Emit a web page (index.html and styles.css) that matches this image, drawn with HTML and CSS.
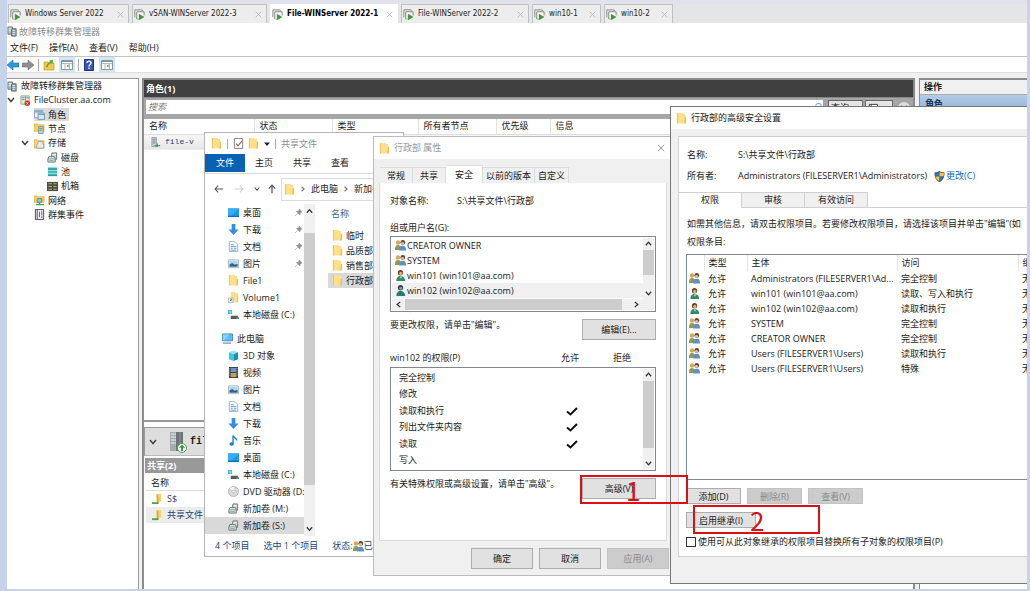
FILE: index.html
```html
<!DOCTYPE html>
<html lang="zh-CN">
<head>
<meta charset="UTF-8">
<meta name="viewport" content="width=device-width, initial-scale=1.0">
<title>故障转移群集管理器</title>
<link rel="stylesheet" href="styles.css">
</head>
<body>

<!-- Icon sprite -->
<svg class="sprite" aria-hidden="true">
  <symbol id="i-vm" viewBox="0 0 12 12"><path d="M1 9V1h8v1M3 11V3h8v4" fill="#fff" stroke="#777" /><path d="M3 11h3M5.500 5.500v6.500l5.500-3.200z" fill="#3c9a2d" stroke="#3c9a2d" stroke-width=".4"/></symbol>
  <symbol id="i-x" viewBox="0 0 10 10"><path d="M1 1l8 8M9 1l-8 8" fill="none" stroke="currentColor" stroke-width="1.200"/></symbol>
  <symbol id="i-cluster" viewBox="0 0 12 12"><path d="M1 1h5v8H1z" fill="#b4bfc3" stroke="#6d7b80"/><path d="M5 3h5v8H5z" fill="#8d9ba0" stroke="#5d6b70"/><path d="M2 3h3M2 5h2M6 5h3M6 7h3M6 9h3" stroke="#e9f2f4"/></symbol>
  <symbol id="i-clred" viewBox="0 0 12 12"><path d="M1 1h5v9H1zM6 1h4v6H6z" fill="#e7ead2" stroke="#9aa07c"/><path d="M2 3h3M2 5h3M7 3h3" stroke="#5f8fc4"/><circle cx="8" cy="9" r="3" fill="#d8322c"/><path d="M7 8l2 2M9 8l-2 2" stroke="#fff"/></symbol>
  <symbol id="i-role" viewBox="0 0 12 12"><path d="M.5 1.500h9v8h-9z" fill="#e8f1f7" stroke="#8aa0b3"/><path d="M1 2h8v2H1z" fill="#7fb1dc"/><path d="M4.500 4.500h7v7h-7z" fill="#d4e6f3" stroke="#7893a9"/><path d="M5 6h6" stroke="#5f9ccb"/></symbol>
  <symbol id="i-node" viewBox="0 0 12 12"><path d="M0 1h4l1 1h6v7H0z" fill="#f4d35e" stroke="#c5a336" stroke-width=".6"/><path d="M5 4h5v7.500H5z" fill="#c8d3d8" stroke="#6d8088" stroke-width=".8"/><path d="M6 6h3M6 8h3" stroke="#52a95d"/></symbol>
  <symbol id="i-store" viewBox="0 0 12 12"><path d="M0 2h4l1 1h6v8H0z" fill="#f7d873" stroke="#caa53a" stroke-width=".7"/><path d="M3 8l1.500-4H9l1.500 4v3H3z" fill="#e9edf0" stroke="#8a949a" stroke-width=".8"/></symbol>
  <symbol id="i-disk" viewBox="0 0 12 12"><path d="M4.500 5l1-4h5v7H9" fill="#cbd6d2" stroke="#65766f"/><path d="M1 7.500l1-2.500h6l1 2.500v3.500H1z" fill="#dfe6e4" stroke="#65766f"/><path d="M1 7.500h8M2.500 9.500h5" stroke="#6b8e7b" stroke-width=".8"/><path d="M6.500 3h3" stroke="#fff"/></symbol>
  <symbol id="i-pool" viewBox="0 0 12 12"><path d="M1 1h10v10H1z" fill="#38b5b5"/><path d="M1 1.500h10M1 5h10M1 8h10" stroke="#aee7e5"/><path d="M1 3.500h10M1 10.500h10" stroke="#247f85" stroke-width=".6"/></symbol>
  <symbol id="i-rack" viewBox="0 0 12 12"><path d="M0 1h12v10H0z" fill="#4b503f"/><path d="M1.500 3h4M7 3h3.500M1.500 6h4M7 6h3.500M1.500 9h4M7 9h3.500" stroke="#b2b78e"/></symbol>
  <symbol id="i-net" viewBox="0 0 12 12"><path d="M0 1h4l1 1h6v6H0z" fill="#f4d35e" stroke="#c5a336" stroke-width=".6"/><path d="M3.500 4h5v4h-5z" fill="#8cc6ea" stroke="#52728a" stroke-width=".8"/><path d="M6 8v2M2 10.500h9" stroke="#44a04d" stroke-width="1.500"/></symbol>
  <symbol id="i-event" viewBox="0 0 12 12"><path d="M1.500.5h9v11h-9z" fill="#f2eff6" stroke="#4b4258"/><path d="M3.500 1v10" stroke="#4b4258"/><path d="M6 3v6M8.500 2v5" stroke="#b13963"/><path d="M8.500 8v2" stroke="#444"/></symbol>
  <symbol id="i-folder" viewBox="0 0 12 12"><path d="M1 0h6.500v1H10v10.500H1z" fill="#ffe08a"/><path d="M1 0h1v11.500H1zM9.500 4H11v7.500H9z" fill="#edc257"/></symbol>
  <symbol id="i-flink" viewBox="0 0 12 12"><path d="M3 0h5v1h3v10.500H3z" fill="#ffe08a"/><path d="M10 4h1v7.500h-1z" fill="#edc257"/><path d="M.5 6.500h5v5h-5z" fill="#fff" stroke="#9a9a9a" stroke-width=".7"/><path d="M2 10l2-2M2.500 8H4v1.500" stroke="#2676c6" fill="none"/></symbol>
  <symbol id="i-task" viewBox="0 0 12 12"><path d="M1.500.5h9v11h-9z" fill="#fff" stroke="#777ba0"/><path d="M3.500 6l2 2.500 4-5" fill="none" stroke="#d2542f" stroke-width="1.300"/></symbol>
  <symbol id="i-desk" viewBox="0 0 12 12"><path d="M0 1.500h12v9H0z" fill="#1c97ec"/><path d="M0 1.500h12L3 10H0z" fill="#36abf7"/><path d="M0 9.500h12v1.500H0z" fill="#0b70c0"/></symbol>
  <symbol id="i-down" viewBox="0 0 12 12"><path d="M4 0h4v6h3.500L6 12 .5 6H4z" fill="#2f8fe6"/></symbol>
  <symbol id="i-doc" viewBox="0 0 12 12"><path d="M1.500.5h6l3 3v8h-9z" fill="#f1f7fc" stroke="#8aa2b8" stroke-width=".8"/><path d="M3 4h3M3 6h6M3 8h2M6.500 8H9M3 10h6" stroke="#4d96d2" stroke-width=".9"/></symbol>
  <symbol id="i-pic" viewBox="0 0 12 12"><path d="M.5 2h11v8.500H.5z" fill="#eef6fc" stroke="#8b9ba8" stroke-width=".7"/><path d="M1.500 3h9v4h-9z" fill="#a9d6f5"/><path d="M1.500 9.500V7l3-1.500L7 7l3.500-.5v3z" fill="#39617d"/></symbol>
  <symbol id="i-drive" viewBox="0 0 12 12"><path d="M0 1h2v2H0zM2.500 1h2v2h-2zM0 3.500h2v2H0zM2.500 3.500h2v2h-2z" fill="#26b6d9"/><path d="M3 7.500h8l1 3.500H3z" fill="#555c60"/><path d="M3 7h8" stroke="#c2c8cb"/><path d="M9 10h2" stroke="#66d35c"/></symbol>
  <symbol id="i-pc" viewBox="0 0 12 12"><path d="M.5 1h11v7.500H.5z" fill="#5bbcf7" stroke="#2e78b0" stroke-width=".8"/><path d="M1 1.500h7l-5 6.500H1z" fill="#8ad3fc"/><path d="M1 11h9" stroke="#7a93a3" stroke-width="1.400"/></symbol>
  <symbol id="i-cube" viewBox="0 0 12 12"><path d="M1 2.500L6 .5l5 2-5 2z" fill="#9ce4f0"/><path d="M1 2.500l5 2V12L1 10z" fill="#44c3d8"/><path d="M6 4.500l5-2V10l-5 2z" fill="#1a8fae"/></symbol>
  <symbol id="i-video" viewBox="0 0 12 12"><path d="M1 0h10v12H1z" fill="#3c434a"/><path d="M3 1h6v4.500H3z" fill="#6f93c4"/><path d="M3 6.500h6V11H3z" fill="#c49e50"/><path d="M2 1v10M10 1v10" stroke="#ccc" stroke-dasharray="1 1" stroke-width=".8"/></symbol>
  <symbol id="i-music" viewBox="0 0 12 12"><path d="M5.500 9.500V.5c.5 2.500 4 3 4 5.500" fill="none" stroke="#1383d8" stroke-width="1.500"/><ellipse cx="4" cy="9.700" rx="2.400" ry="1.900" fill="#1383d8"/></symbol>
  <symbol id="i-dvd" viewBox="0 0 12 12"><circle cx="6" cy="6" r="5.500" fill="#d8dadc" stroke="#9d9fa1" stroke-width=".7"/><path d="M6 6L2 2.500A5 5 0 0 1 6 .8z" fill="#f8f8f8"/><circle cx="6" cy="6" r="1.500" fill="#fff" stroke="#999" stroke-width=".5"/></symbol>
  <symbol id="i-group" viewBox="0 0 12 12"><circle cx="3.300" cy="2.800" r="2.400" fill="#d3a85f"/><path d="M0 11c0-4 1-5.500 3.500-5.500S7 8 7 11z" fill="#8f9a4e"/><circle cx="8.500" cy="2.700" r="2.600" fill="#6a4630"/><circle cx="8.200" cy="3.700" r="1.600" fill="#eac294"/><path d="M4.500 11.500c0-4 1.500-5.300 3.800-5.300S12 7.500 12 11.500z" fill="#5f8fc6"/></symbol>
  <symbol id="i-user" viewBox="0 0 12 12"><circle cx="6" cy="3" r="2.900" fill="#62452f"/><circle cx="6.300" cy="3.800" r="1.800" fill="#dbac80"/><path d="M1.500 12c0-4 2-5.500 4.500-5.500s5 1.500 5 5.500z" fill="#2e8b63"/><path d="M5.500 7l1 2.500L7.500 7z" fill="#fff"/></symbol>
  <symbol id="i-user2" viewBox="0 0 12 12"><circle cx="6" cy="3" r="2.900" fill="#31464a"/><circle cx="6.300" cy="3.800" r="1.600" fill="#8aa092"/><path d="M1.500 12c0-4 2-5.500 4.500-5.500s5 1.500 5 5.500z" fill="#1f7f78"/></symbol>
  <symbol id="i-shield" viewBox="0 0 12 12"><path d="M6 0c2 1.300 3.500 1.500 5.500 1.500C11.500 7 10 10 6 12 2 10 .5 7 .5 1.500 2.500 1.500 4 1.300 6 0z" fill="#4d4d4d"/><path d="M6 1v5H1.500L1.200 2.300C3 2.200 4.500 2 6 1z" fill="#2c6fc4"/><path d="M6 1v5h4.500l.3-3.700C9 2.200 7.500 2 6 1zM6 6v5C3.500 9.800 2 8.500 1.500 6z" fill="#f3c52e"/><path d="M6 6v5c2.500-1.200 4-2.500 4.500-5z" fill="#2c6fc4"/></symbol>
  <symbol id="i-pin" viewBox="0 0 10 10"><path d="M6 0l4 4-1 .5L7.500 6 7 8.500l-5-5L4.500 3 6 1.300zM4 6L0 10" fill="#8c9399" stroke="#8c9399" stroke-width=".8"/></symbol>
  <symbol id="i-cu" viewBox="0 0 8 8"><path d="M1 6l3-3.500L7 6" fill="none" stroke="currentColor" stroke-width="1.500"/></symbol>
  <symbol id="i-cd" viewBox="0 0 8 8"><path d="M1 2l3 3.500L7 2" fill="none" stroke="currentColor" stroke-width="1.500"/></symbol>
  <symbol id="i-cl" viewBox="0 0 8 8"><path d="M6 1L2.500 4 6 7" fill="none" stroke="currentColor" stroke-width="1.500"/></symbol>
  <symbol id="i-cr" viewBox="0 0 8 8"><path d="M2 1l3.500 3L2 7" fill="none" stroke="currentColor" stroke-width="1.500"/></symbol>
  <symbol id="i-left" viewBox="0 0 12 12"><path d="M11 6H1.500M5 2L1.300 6 5 10" fill="none" stroke="currentColor" stroke-width="1.300"/></symbol>
  <symbol id="i-right" viewBox="0 0 12 12"><path d="M1 6h9.500M7 2l3.700 4L7 10" fill="none" stroke="currentColor" stroke-width="1.300"/></symbol>
  <symbol id="i-up" viewBox="0 0 12 12"><path d="M6 11V1.500M2 5.500l4-4.200 4 4.200" fill="none" stroke="currentColor" stroke-width="1.500"/></symbol>
  <symbol id="i-tri" viewBox="0 0 8 8"><path d="M0 2h8L4 6.500z" fill="currentColor"/></symbol>
  <symbol id="i-check" viewBox="0 0 12 12"><path d="M1 6.500L4.500 9.500 11 3" fill="none" stroke="#111" stroke-width="2"/></symbol>
  <symbol id="i-back" viewBox="0 0 12 12"><path d="M6 1v3h6v4H6v3L0 6z" fill="#2f9ad8" stroke="#1a73ad" stroke-width=".6"/></symbol>
  <symbol id="i-fwd" viewBox="0 0 12 12"><path d="M6 1v3H0v4h6v3l6-5z" fill="#8d8f91" stroke="#6e7072" stroke-width=".6"/></symbol>
  <symbol id="i-upf" viewBox="0 0 12 12"><path d="M1 3h4l1 1h5v7H1z" fill="#f3c94c" stroke="#b9922a" stroke-width=".7"/><path d="M3 8c1-3 2-4 4-5l-1-1.500L10 1l-.5 4L8 4C6 5 5 6 4.500 8.500z" fill="#54ae3c"/></symbol>
  <symbol id="i-pane" viewBox="0 0 12 12"><path d="M.5 1.500h11v9H.5z" fill="#fff" stroke="#8d979f"/><path d="M1 2.500h10" stroke="#6f91b0"/><path d="M1 4.500h10M4 5v5M8.500 5v5" stroke="#b3bcc3"/><path d="M7.500 5.500L5.500 7l2 1.500z" fill="#38943a"/></symbol>
  <symbol id="i-help" viewBox="0 0 12 12"><path d="M1.500.5h9v11h-9z" fill="#3457b8" stroke="#1f3680"/><path d="M4 4c0-2.500 4-2.500 4 0 0 1.500-2 1.500-2 3.500M6 8.500V10" fill="none" stroke="#fff" stroke-width="1.400"/></symbol>
  <symbol id="i-srv" viewBox="0 0 12 12"><path d="M2 .5h5v10H2z" fill="#c8cfd2" stroke="#7f8a8f" stroke-width=".7"/><path d="M3 2.500h3M3 4.500h3M3 6.500h3" stroke="#6d787d" stroke-width=".8"/><path d="M5 9.500h6M8 7v4" stroke="#3aa648" stroke-width="1.400"/></symbol>
  <symbol id="i-bigsrv" viewBox="0 0 18 22"><path d="M1 1h7v19H1z" fill="#a4acb0"/><path d="M7 1h7v19H7z" fill="#6c7478"/><path d="M2 3h5M2 6h5M2 9h5M2 12h5" stroke="#edf1f2" stroke-width="1.200"/><path d="M11 1v19" stroke="#8e979b"/><circle cx="13" cy="17" r="4.500" fill="#fff" stroke="#4aa354"/><path d="M13 13.500l3 3.300h-2V20h-2v-3.200h-2z" fill="#2f9e3b"/></symbol>
  <symbol id="i-share" viewBox="0 0 12 12"><path d="M5 0h5v8L6 10z" fill="#f6d565"/><path d="M5 0l2 2v9L5 9z" fill="#d9ab32"/><path d="M0 10h7" stroke="#41a84c" stroke-width="2"/></symbol>
  <symbol id="i-find" viewBox="0 0 10 10"><circle cx="5" cy="4" r="3" fill="none" stroke="#8fb4dc" stroke-width="1.300"/><path d="M5 7v3" stroke="#8fb4dc"/></symbol>
  <symbol id="i-save" viewBox="0 0 12 12"><path d="M1.500 1.500h9v9h-9z" fill="#fff" stroke="#333"/><path d="M3.500 1.500v9" stroke="#333"/></symbol>
</svg>

<main class="screen">

  <!-- VM tabs -->
  <nav class="vm-tabs">
    <div class="vm-tab w-a"><svg><use href="#i-vm"/></svg><button>Windows Server 2022</button><button class="x" aria-label="关闭"><svg><use href="#i-x"/></svg></button></div>
    <div class="vm-tab w-b"><svg><use href="#i-vm"/></svg><button>vSAN-WINServer 2022-3</button><button class="x" aria-label="关闭"><svg><use href="#i-x"/></svg></button></div>
    <div class="vm-tab w-c active"><svg><use href="#i-vm"/></svg><button>File-WINServer 2022-1</button><button class="x" aria-label="关闭"><svg><use href="#i-x"/></svg></button></div>
    <div class="vm-tab w-c"><svg><use href="#i-vm"/></svg><button>File-WINServer 2022-2</button><button class="x" aria-label="关闭"><svg><use href="#i-x"/></svg></button></div>
    <div class="vm-tab w-d"><svg><use href="#i-vm"/></svg><button>win10-1</button><button class="x" aria-label="关闭"><svg><use href="#i-x"/></svg></button></div>
    <div class="vm-tab w-d"><svg><use href="#i-vm"/></svg><button>win10-2</button><button class="x" aria-label="关闭"><svg><use href="#i-x"/></svg></button></div>
  </nav>

  <!-- Failover Cluster Manager -->
  <header class="app-title"><svg class="ic"><use href="#i-cluster"/></svg>故障转移群集管理器</header>
  <nav class="menu"><button>文件(F)</button><button>操作(A)</button><button>查看(V)</button><button>帮助(H)</button></nav>
  <div class="toolbar">
    <button aria-label="后退"><svg><use href="#i-back"/></svg></button>
    <button aria-label="前进"><svg><use href="#i-fwd"/></svg></button>
    <i></i>
    <button aria-label="向上"><svg><use href="#i-upf"/></svg></button>
    <button class="on" aria-label="树"><svg><use href="#i-pane"/></svg></button>
    <i></i>
    <button aria-label="帮助"><svg><use href="#i-help"/></svg></button>
    <button class="on" aria-label="操作窗格"><svg><use href="#i-pane"/></svg></button>
  </div>

  <div class="panes">
    <aside class="tree">
      <ul>
        <li><svg class="ic"><use href="#i-cluster"/></svg>故障转移群集管理器</li>
        <li><svg class="chev"><use href="#i-cd"/></svg><svg class="ic"><use href="#i-clred"/></svg>FileCluster.aa.com</li>
        <li class="l2"><span class="sel"><svg class="ic"><use href="#i-role"/></svg>角色</span></li>
        <li class="l2"><svg class="ic"><use href="#i-node"/></svg>节点</li>
        <li class="l2c"><svg class="chev"><use href="#i-cd"/></svg><svg class="ic"><use href="#i-store"/></svg>存储</li>
        <li class="l3"><svg class="ic"><use href="#i-disk"/></svg>磁盘</li>
        <li class="l3"><svg class="ic"><use href="#i-pool"/></svg>池</li>
        <li class="l3"><svg class="ic"><use href="#i-rack"/></svg>机箱</li>
        <li class="l2"><svg class="ic"><use href="#i-net"/></svg>网络</li>
        <li class="l2"><svg class="ic"><use href="#i-event"/></svg>群集事件</li>
      </ul>
    </aside>

    <section class="center">
      <h2>角色(1)</h2>
      <div class="filter">
        <label class="search"><input type="text" placeholder="搜索" aria-label="搜索"><svg><use href="#i-find"/></svg></label>
        <button class="drop">查询<svg><use href="#i-tri"/></svg></button>
        <button class="drop" aria-label="保存"><svg class="save"><use href="#i-save"/></svg><svg><use href="#i-tri"/></svg></button>
        <button class="round" aria-label="展开"><svg><use href="#i-cd"/></svg></button>
      </div>
      <table class="roles">
        <colgroup><col class="c1"><col class="c2"><col class="c3"><col class="c2"><col class="c4"><col></colgroup>
        <thead><tr><th>名称</th><th>状态</th><th>类型</th><th>所有者节点</th><th>优先级</th><th>信息</th></tr></thead>
        <tbody><tr><td colspan="6"><svg class="ic"><use href="#i-srv"/></svg>file-v</td></tr></tbody>
      </table>
      <div class="detail">
        <div class="detail-head"><svg class="chev"><use href="#i-cd"/></svg><svg class="big"><use href="#i-bigsrv"/></svg><b>file-v</b></div>
        <h3>共享(2)</h3>
        <div class="shares">
          <p class="th">名称</p>
          <p><svg class="ic"><use href="#i-share"/></svg>S$</p>
          <p class="sel"><svg class="ic"><use href="#i-share"/></svg>共享文件</p>
        </div>
      </div>
    </section>

    <aside class="actions">
      <h2>操作</h2>
      <h3>角色</h3>
    </aside>
  </div>

  <!-- Explorer -->
  <section class="win explorer">
    <header class="ex-title">
      <svg class="ic"><use href="#i-folder"/></svg><i></i><svg class="ic"><use href="#i-task"/></svg><svg class="ic"><use href="#i-folder"/></svg><svg class="tri"><use href="#i-tri"/></svg><i></i><span>共享文件</span>
    </header>
    <nav class="ribbon"><button class="file">文件</button><button>主页</button><button>共享</button><button>查看</button></nav>
    <div class="ex-nav">
      <button aria-label="后退"><svg><use href="#i-left"/></svg></button>
      <button class="off" aria-label="前进"><svg><use href="#i-right"/></svg></button>
      <button class="sm" aria-label="最近"><svg><use href="#i-cd"/></svg></button>
      <button aria-label="上移"><svg><use href="#i-up"/></svg></button>
      <div class="address"><svg class="ic"><use href="#i-folder"/></svg><svg class="sep"><use href="#i-cr"/></svg>此电脑<svg class="sep"><use href="#i-cr"/></svg>新加卷</div>
    </div>
    <div class="ex-body">
      <ul class="places">
        <li><svg class="ic"><use href="#i-desk"/></svg>桌面<svg class="pin"><use href="#i-pin"/></svg></li>
        <li><svg class="ic"><use href="#i-down"/></svg>下载<svg class="pin"><use href="#i-pin"/></svg></li>
        <li><svg class="ic"><use href="#i-doc"/></svg>文档<svg class="pin"><use href="#i-pin"/></svg></li>
        <li><svg class="ic"><use href="#i-pic"/></svg>图片<svg class="pin"><use href="#i-pin"/></svg></li>
        <li><svg class="ic"><use href="#i-folder"/></svg>File1</li>
        <li><svg class="ic"><use href="#i-flink"/></svg>Volume1</li>
        <li><svg class="ic"><use href="#i-drive"/></svg>本地磁盘 (C:)</li>
        <li class="root"><svg class="ic"><use href="#i-pc"/></svg>此电脑</li>
        <li><svg class="ic"><use href="#i-cube"/></svg>3D 对象</li>
        <li><svg class="ic"><use href="#i-video"/></svg>视频</li>
        <li><svg class="ic"><use href="#i-pic"/></svg>图片</li>
        <li><svg class="ic"><use href="#i-doc"/></svg>文档</li>
        <li><svg class="ic"><use href="#i-down"/></svg>下载</li>
        <li><svg class="ic"><use href="#i-music"/></svg>音乐</li>
        <li><svg class="ic"><use href="#i-desk"/></svg>桌面</li>
        <li><svg class="ic"><use href="#i-drive"/></svg>本地磁盘 (C:)</li>
        <li><svg class="ic"><use href="#i-dvd"/></svg>DVD 驱动器 (D:</li>
        <li><svg class="ic"><use href="#i-disk"/></svg>新加卷 (M:)</li>
        <li class="sel"><svg class="ic"><use href="#i-disk"/></svg>新加卷 (S:)</li>
      </ul>
      <div class="vbar ex-bar"><svg><use href="#i-cu"/></svg><span></span><svg><use href="#i-cd"/></svg></div>
      <div class="files">
        <p class="th">名称</p>
        <p><svg class="ic"><use href="#i-folder"/></svg>临时</p>
        <p><svg class="ic"><use href="#i-folder"/></svg>品质部</p>
        <p><svg class="ic"><use href="#i-folder"/></svg>销售部</p>
        <p class="sel"><svg class="ic"><use href="#i-folder"/></svg>行政部</p>
      </div>
    </div>
    <footer class="ex-status"><span>4 个项目</span><span>选中 1 个项目</span><span class="state">状态:<svg class="ic"><use href="#i-group"/></svg>已共享</span></footer>
  </section>

  <!-- Properties dialog -->
  <section class="win props">
    <header class="dlg-title"><svg class="ic"><use href="#i-folder"/></svg><span>行政部 属性</span><button aria-label="关闭"><svg><use href="#i-x"/></svg></button></header>
    <nav class="tabs"><button>常规</button><button>共享</button><button class="active">安全</button><button>以前的版本</button><button>自定义</button></nav>
    <div class="page">
      <p class="object"><span>对象名称:</span>S:\共享文件\行政部</p>
      <p class="cap">组或用户名(G):</p>
      <div class="box users">
        <div class="users-main">
          <ul>
            <li><svg class="ic"><use href="#i-group"/></svg>CREATOR OWNER</li>
            <li><svg class="ic"><use href="#i-group"/></svg>SYSTEM</li>
            <li><svg class="ic"><use href="#i-user"/></svg>win101 (win101@aa.com)</li>
            <li class="sel"><svg class="ic"><use href="#i-user2"/></svg>win102 (win102@aa.com)</li>
          </ul>
          <div class="vbar"><svg><use href="#i-cu"/></svg><span></span><svg><use href="#i-cd"/></svg></div>
        </div>
        <div class="hbar"><svg><use href="#i-cl"/></svg><span></span><svg><use href="#i-cr"/></svg></div>
      </div>
      <div class="line edit"><p>要更改权限，请单击"编辑"。</p><button class="btn">编辑(E)...</button></div>
      <div class="perm-head"><span>win102 的权限(P)</span><span>允许</span><span>拒绝</span></div>
      <div class="box perms">
        <ul>
          <li>完全控制</li>
          <li>修改</li>
          <li>读取和执行<svg><use href="#i-check"/></svg></li>
          <li>列出文件夹内容<svg><use href="#i-check"/></svg></li>
          <li>读取<svg><use href="#i-check"/></svg></li>
          <li>写入</li>
        </ul>
        <div class="vbar"><svg><use href="#i-cu"/></svg><span></span><svg><use href="#i-cd"/></svg></div>
      </div>
      <div class="line adv-line"><p>有关特殊权限或高级设置，请单击"高级"。</p><button class="btn">高级(V)</button></div>
    </div>
    <footer class="dlg-foot"><button class="btn">确定</button><button class="btn">取消</button><button class="btn" disabled>应用(A)</button></footer>
  </section>

  <!-- Advanced security dialog -->
  <section class="win advanced">
    <header class="dlg-title"><svg class="ic"><use href="#i-folder"/></svg><span>行政部的高级安全设置</span></header>
    <div class="page">
      <dl>
        <dt>名称:</dt><dd>S:\共享文件\行政部</dd>
        <dt>所有者:</dt><dd>Administrators (FILESERVER1\Administrators)<svg class="ic"><use href="#i-shield"/></svg><a href="#">更改(C)</a></dd>
      </dl>
      <nav class="adv-tabs"><button class="active">权限</button><button>审核</button><button>有效访问</button></nav>
      <div class="adv-body">
        <p class="info">如需其他信息，请双击权限项目。若要修改权限项目，请选择该项目并单击"编辑"(如</p>
        <p class="info">权限条目:</p>
        <div class="entries">
          <table>
            <colgroup><col class="e1"><col class="e2"><col class="e3"><col class="e4"><col></colgroup>
            <thead><tr><th></th><th>类型</th><th>主体</th><th>访问</th><th>继</th></tr></thead>
            <tbody>
              <tr><td><svg class="ic"><use href="#i-group"/></svg></td><td>允许</td><td>Administrators (FILESERVER1\Ad...</td><td>完全控制</td><td>无</td></tr>
              <tr><td><svg class="ic"><use href="#i-user"/></svg></td><td>允许</td><td>win101 (win101@aa.com)</td><td>读取、写入和执行</td><td>无</td></tr>
              <tr><td><svg class="ic"><use href="#i-user"/></svg></td><td>允许</td><td>win102 (win102@aa.com)</td><td>读取和执行</td><td>无</td></tr>
              <tr><td><svg class="ic"><use href="#i-group"/></svg></td><td>允许</td><td>SYSTEM</td><td>完全控制</td><td>无</td></tr>
              <tr><td><svg class="ic"><use href="#i-group"/></svg></td><td>允许</td><td>CREATOR OWNER</td><td>完全控制</td><td>无</td></tr>
              <tr><td><svg class="ic"><use href="#i-group"/></svg></td><td>允许</td><td>Users (FILESERVER1\Users)</td><td>读取和执行</td><td>无</td></tr>
              <tr><td><svg class="ic"><use href="#i-group"/></svg></td><td>允许</td><td>Users (FILESERVER1\Users)</td><td>特殊</td><td>无</td></tr>
            </tbody>
          </table>
        </div>
        <div class="row-btns"><button class="btn">添加(D)</button><button class="btn" disabled>删除(R)</button><button class="btn" disabled>查看(V)</button></div>
        <button class="btn inherit">启用继承(I)</button>
        <label class="replace"><input type="checkbox">使用可从此对象继承的权限项目替换所有子对象的权限项目(P)</label>
      </div>
    </div>
  </section>

  <!-- Step marks -->
  <div class="mark one">1</div>
  <div class="mark two">2</div>

</main>
</body>
</html>
```

FILE: styles.css
```css
:root{
  --ui:"Open Sans","Noto Sans CJK SC",sans-serif;
  --gray:#f0f0f0;
  --line:#dcdcdc;
  --thumb:#cdcdcd;
}

*{margin:0;padding:0;box-sizing:border-box}
html,body{height:100%}
body{font:9px/12px var(--ui);color:#1a1a1a;background:#c6d3eb;padding:0 3px 2px 7px;overflow:hidden}
button,input{font:inherit;color:inherit;background:none;border:none}
ul{list-style:none}
svg{display:block;flex:none}
p,span,li,button,a,header{white-space:nowrap}
.sprite{position:absolute;width:0;height:0}
.ic{width:11px;height:11px}
.chev{width:8px;height:8px;color:#444}

.screen{position:relative;height:100%;background:#fff;overflow:hidden;display:flex;flex-direction:column}

/* ---------------- VM tabs ---------------- */
.vm-tabs{flex:none;height:23px;display:flex;align-items:flex-end;gap:3px;padding-left:1px;background:linear-gradient(#e1e2ee 4px,#e4e5e6 4px)}
.vm-tab{display:flex;align-items:center;gap:4px;height:19px;padding:0 4px 0 1px;border:1px solid #bfc0c3;border-bottom:none;background:#ededee;font:8px/12px "DejaVu Sans Condensed","DejaVu Sans",sans-serif;color:#222}
.vm-tab > svg{width:11px;height:11px}
.vm-tab .x{margin-left:auto;color:#b5b5b5}
.vm-tab .x svg{width:7px;height:7px}
.vm-tab.active{background:#fff;border-color:#fff;color:#000;font-weight:700}
.w-a{width:121px}
.w-b{width:135px}
.w-c{width:128px}
.w-d{width:69px}

/* ---------------- App chrome ---------------- */
.app-title{flex:none;height:17px;display:flex;align-items:center;gap:1px;color:#8b8b8b}
.menu{flex:none;height:17px;display:flex;align-items:center;gap:11px;padding-left:3px;border-bottom:1px solid #c5c5c5}
.toolbar{flex:none;height:16px;display:flex;align-items:center;gap:3px;border-bottom:1px solid #ddd}
.toolbar button{width:14px;height:15px;display:flex;align-items:center;justify-content:center}
.toolbar button:first-child{width:11px}
.toolbar svg{width:12px;height:12px}
.toolbar .on{width:16px;background:#cfe6f7}
.toolbar i{width:1px;height:12px;background:#aaa}

.panes{flex:1;min-height:0;display:flex;padding-top:5px;background:var(--gray)}

/* ---------------- Tree ---------------- */
.tree{flex:none;width:132px;background:#fff;border:1px solid #9b9b9b;border-width:1px 1px 0 0}
.tree ul{height:143px;display:flex;flex-direction:column;justify-content:space-between}
.tree li{height:14px;display:flex;align-items:center;gap:3px}
.tree .l2{padding-left:27px}
.tree .l2c{padding-left:14px}
.tree .l3{padding-left:40px}
.tree .sel{display:flex;align-items:center;gap:3px;height:13px;padding-right:3px;background:#d9d9d9}
.tree .chev{margin-right:2px}

/* ---------------- Roles pane ---------------- */
.center{flex:1;min-width:0;margin-left:3px;display:flex;flex-direction:column;background:#fff;border:2px solid #8b8b8b;border-bottom:none}
.center h2{flex:none;height:17px;padding-left:2px;background:#404040;color:#fff;font:700 9px/17px var(--ui)}
.filter{flex:none;height:22px;display:flex;align-items:flex-start;gap:2px;padding:2px 2px 0;background:#a6a6a6;border-top:1px solid #888}
.search{flex:1;display:flex;align-items:center;height:14px;background:#fff;margin-right:3px}
.search input{flex:1;min-width:0;padding-left:2px;outline:none}
.search input::placeholder{font-style:italic;color:#777}
.search svg{width:9px;height:10px}
.drop{height:16px;display:flex;align-items:center;gap:4px;padding:0 2px;background:#e4e4e4;border:1px solid #666}
.drop svg{width:7px;height:7px}
.drop .save{width:11px;height:11px}
.round{width:12px;height:12px;border-radius:50%;background:#ddd;display:flex;align-items:center;justify-content:center;margin:2px 1px 0 3px}
.round svg{width:8px;height:8px}
.roles{table-layout:fixed;width:100%;border-collapse:collapse}
.roles th{height:15px;padding-left:5px;text-align:left;font-weight:400;border-right:1px solid #e2e2e2;border-bottom:1px solid #ddd}
.roles td{height:16px;padding-left:6px;font:8px/12px "Liberation Mono",monospace;color:#223f86;background:linear-gradient(#f7f7f7,#e6e6e6)}
.roles td .ic{display:inline-block;vertical-align:middle;margin-right:4px}
.c1{width:110px}
.c2{width:78px}
.c3{width:86px}
.c4{width:54px}

.detail{margin-top:auto;flex:none;height:169px;border-top:2px solid #999;padding-top:5px;background:#fff}
.detail-head{display:flex;align-items:center;gap:12px;height:29px;padding-left:4px;border:1px solid #999;border-bottom-color:#bbb;background:#dedede;font:10px/12px "Liberation Mono",monospace}
.detail-head .big{width:18px;height:22px}
.detail-head b{margin-left:-9px}
.detail h3{height:15px;margin:2px 0 0 1px;padding-left:2px;background:#999;color:#fff;font:700 9px/15px var(--ui)}
.shares{margin:2px 0 0 2px;color:#1f3f7c}
.shares p{display:flex;align-items:center;gap:4px;height:16px;padding-left:6px}
.shares .th{color:#222;padding-left:5px;border-bottom:1px solid #ddd}
.shares .sel{background:#ececec}

.actions{flex:none;width:108px;margin-left:4px;background:#fff;border:1px solid #8b8b8b;border-width:2px 0 0 1px}
.actions h2{height:15px;padding-left:4px;background:var(--gray);border-bottom:1px solid #aaa;font:700 9px/14px var(--ui)}
.actions h3{height:17px;padding-left:5px;background:linear-gradient(#b4cce6,#8fb0d5);color:#1d3557;font:700 9px/17px var(--ui)}

/* ---------------- Floating windows ---------------- */
.win{position:absolute;background:#fff;border:1px solid #b5b5b5}
.vbar{flex:none;width:11px;display:flex;flex-direction:column;align-items:center;background:var(--gray);color:#333}
.vbar svg{width:7px;height:11px}
.vbar span{width:100%;background:var(--thumb)}
.vbar svg:last-child{margin-top:auto}
.hbar{height:11px;display:flex;align-items:center;gap:3px;padding:0 14px 0 3px;background:var(--gray);color:#333}
.hbar svg{width:7px;height:7px}
.hbar span{width:217px;height:11px;background:var(--thumb)}
.hbar svg:last-child{margin-left:auto}
.btn{height:21px;background:#e1e1e1;border:1px solid #adadad;text-align:center}
.btn:disabled{background:#ccc;border-color:#c3c3c3;color:#8b8b8b}

/* ---------------- Explorer ---------------- */
.explorer{left:197px;top:132px;width:200px}
.ex-title{display:flex;align-items:center;height:21px;padding-left:6px;color:#8b8b8b;gap:4px}
.ex-title i{width:1px;height:10px;background:#aaa;margin:0 1px}
.ex-title .tri{width:6px;height:6px;color:#222;margin-left:1px}
.ribbon{display:flex;height:20px;border-bottom:1px solid #ddd}
.ribbon button{width:38px;height:18px}
.ribbon .file{width:40px;background:#0a61b4;color:#fff}
.ex-nav{display:flex;align-items:center;height:30px;padding-left:9px;color:#555}
.ex-nav > button{width:20px}
.ex-nav > .sm{width:13px}
.ex-nav > button svg{width:10px;height:10px}
.ex-nav > .sm svg{width:6px;height:6px}
.ex-nav .off{color:#ccc}
.address{flex:1;display:flex;align-items:center;height:23px;margin-left:-6px;padding-left:2px;border:1px solid #ddd;color:#222}
.address .sep{width:6px;height:6px;margin:0 5px;color:#777}
.ex-body{display:flex}
.places{width:99px;padding-bottom:2px;overflow:hidden}
.places li{display:flex;align-items:center;gap:4px;height:17px;padding:0 2px 0 23px}
.places .root{margin-top:7px;padding-left:17px}
.places .pin{width:7px;height:7px;margin-left:auto}
.places .sel{background:#d9d9d9}
.ex-bar svg{height:14px}
.ex-bar span{height:252px;margin-top:15px}
.files{padding-left:13px;flex:1;overflow:hidden}
.files p{display:flex;align-items:center;gap:3px;height:15px;padding-left:4px}
.files .th{height:24px;padding:0 3px 4px;color:#4a6284}
.files .sel{background:#d9d9d9}
.ex-status{display:flex;align-items:center;gap:14px;height:20px;padding-left:10px;color:#1f3f7c}
.ex-status .state{display:flex;align-items:center}

/* ---------------- Properties dialog ---------------- */
.props{left:366px;top:136px;width:304px;background:var(--gray);border-color:#bbb}
.dlg-title{display:flex;align-items:center;gap:4px;height:22px;padding-left:5px;background:#fff}
.props .dlg-title{color:#999}
.dlg-title button{margin-left:auto;padding-right:11px}
.dlg-title button svg{width:8px;height:8px}
.tabs{display:flex;align-items:flex-end;height:24px;padding-left:6px}
.tabs button{height:16px;padding:0 5px;border:1px solid var(--line);border-width:1px 1px 0 0;background:var(--gray)}
.tabs button:nth-child(-n+2){padding:0 7px}
.tabs button:nth-child(n+4){padding:0 3px}
.tabs .active{height:18px;padding:0 9px;background:#fff}
.props .page{margin-left:5px;width:288px;height:358px;padding:0 10px;background:#fff;border:1px solid var(--line);border-top:none}
.object{display:flex;height:31px;padding-top:12px}
.object span{width:67px}
.cap{height:22px;padding-top:8px}
.box{border:1px solid #828790;background:#fff;padding:1px}
.users-main{display:flex;height:61px}
.users-main ul{flex:1}
.users li{display:flex;align-items:center;gap:1px;height:15px;padding-left:3px}
.users li.sel{background:var(--gray)}
.users .vbar span{height:25px;margin-top:1px}
.line{display:flex;justify-content:space-between}
.line .btn{width:74px}
.edit{padding-top:7px;height:39px}
.adv-line{padding-top:7px}
.perm-head{display:flex;height:16px;line-height:14px}
.perm-head span:first-child{width:171px}
.perm-head span:nth-child(2){width:52px}
.perms{display:flex;height:104px}
.perms ul{flex:1;display:flex;flex-direction:column;justify-content:space-between;padding:1px 0}
.perms li{display:flex;align-items:center;height:15px;padding-left:7px}
.perms li svg{width:12px;height:12px;margin-left:auto;margin-right:65px}
.perms .vbar span{height:67px;margin-top:1px}
.dlg-foot{display:flex;gap:6px;padding:7px 7px 6px;justify-content:flex-end}
.dlg-foot .btn{width:62px}

/* ---------------- Advanced security ---------------- */
.advanced{left:663px;top:106px;right:0;background:var(--gray);border-color:#777;border-right:none;overflow:hidden;padding-bottom:26px}
.advanced .page{margin:7px 0 0 7px;background:#fff;border:1px solid #d0d0d0;border-right:none}
.advanced dl{display:grid;grid-template-columns:51px 1fr;row-gap:9px;padding:12px 0 10px 8px}
.advanced dd{display:flex;align-items:center;white-space:nowrap}
.advanced dd .ic{margin:0 1px 0 7px}
.advanced a{color:#0a66c8;text-decoration:none}
.adv-tabs{display:flex;height:16px;border-bottom:1px solid #d0d0d0}
.adv-tabs button{width:63px;height:16px;background:var(--gray);border:1px solid #d0d0d0;border-left:none}
.adv-tabs .active{background:#fff;border-bottom-color:#fff}
.adv-body{padding:10px 0 8px 7px}
.info{height:18px;line-height:12px;padding-left:1px}
.entries{height:226px;border:1px solid #828790;border-right:none;overflow:hidden;margin-bottom:8px}
.entries table{table-layout:fixed;border-collapse:collapse;width:100%}
.entries th,.entries td{height:15px;padding:0 0 0 4px;text-align:left;font-weight:400;white-space:nowrap}
.entries th{height:16px;border-right:1px solid #e5e5e5}
.entries td:first-child{padding:0 0 0 2px}
.e1{width:17px}
.e2{width:43px}
.e3{width:150px}
.e4{width:121px}
.row-btns{display:flex;gap:6px;margin-bottom:8px}
.advanced .btn{height:16px;width:55px;line-height:13px}
.advanced .inherit{width:70px}
.replace{display:flex;align-items:center;gap:2px;margin-top:8px;white-space:nowrap}
.replace input{appearance:none;width:10px;height:10px;border:1px solid #333;background:#fff}

/* ---------------- Step marks ---------------- */
.mark{position:absolute;border:2px solid #dc1014;color:#dc1014;font:400 26px/26px "Noto Sans CJK SC",sans-serif}
.one{left:573px;top:475px;width:108px;height:29px;padding-left:44px}
.two{left:686px;top:505px;width:127px;height:29px;padding-left:55px}
```
